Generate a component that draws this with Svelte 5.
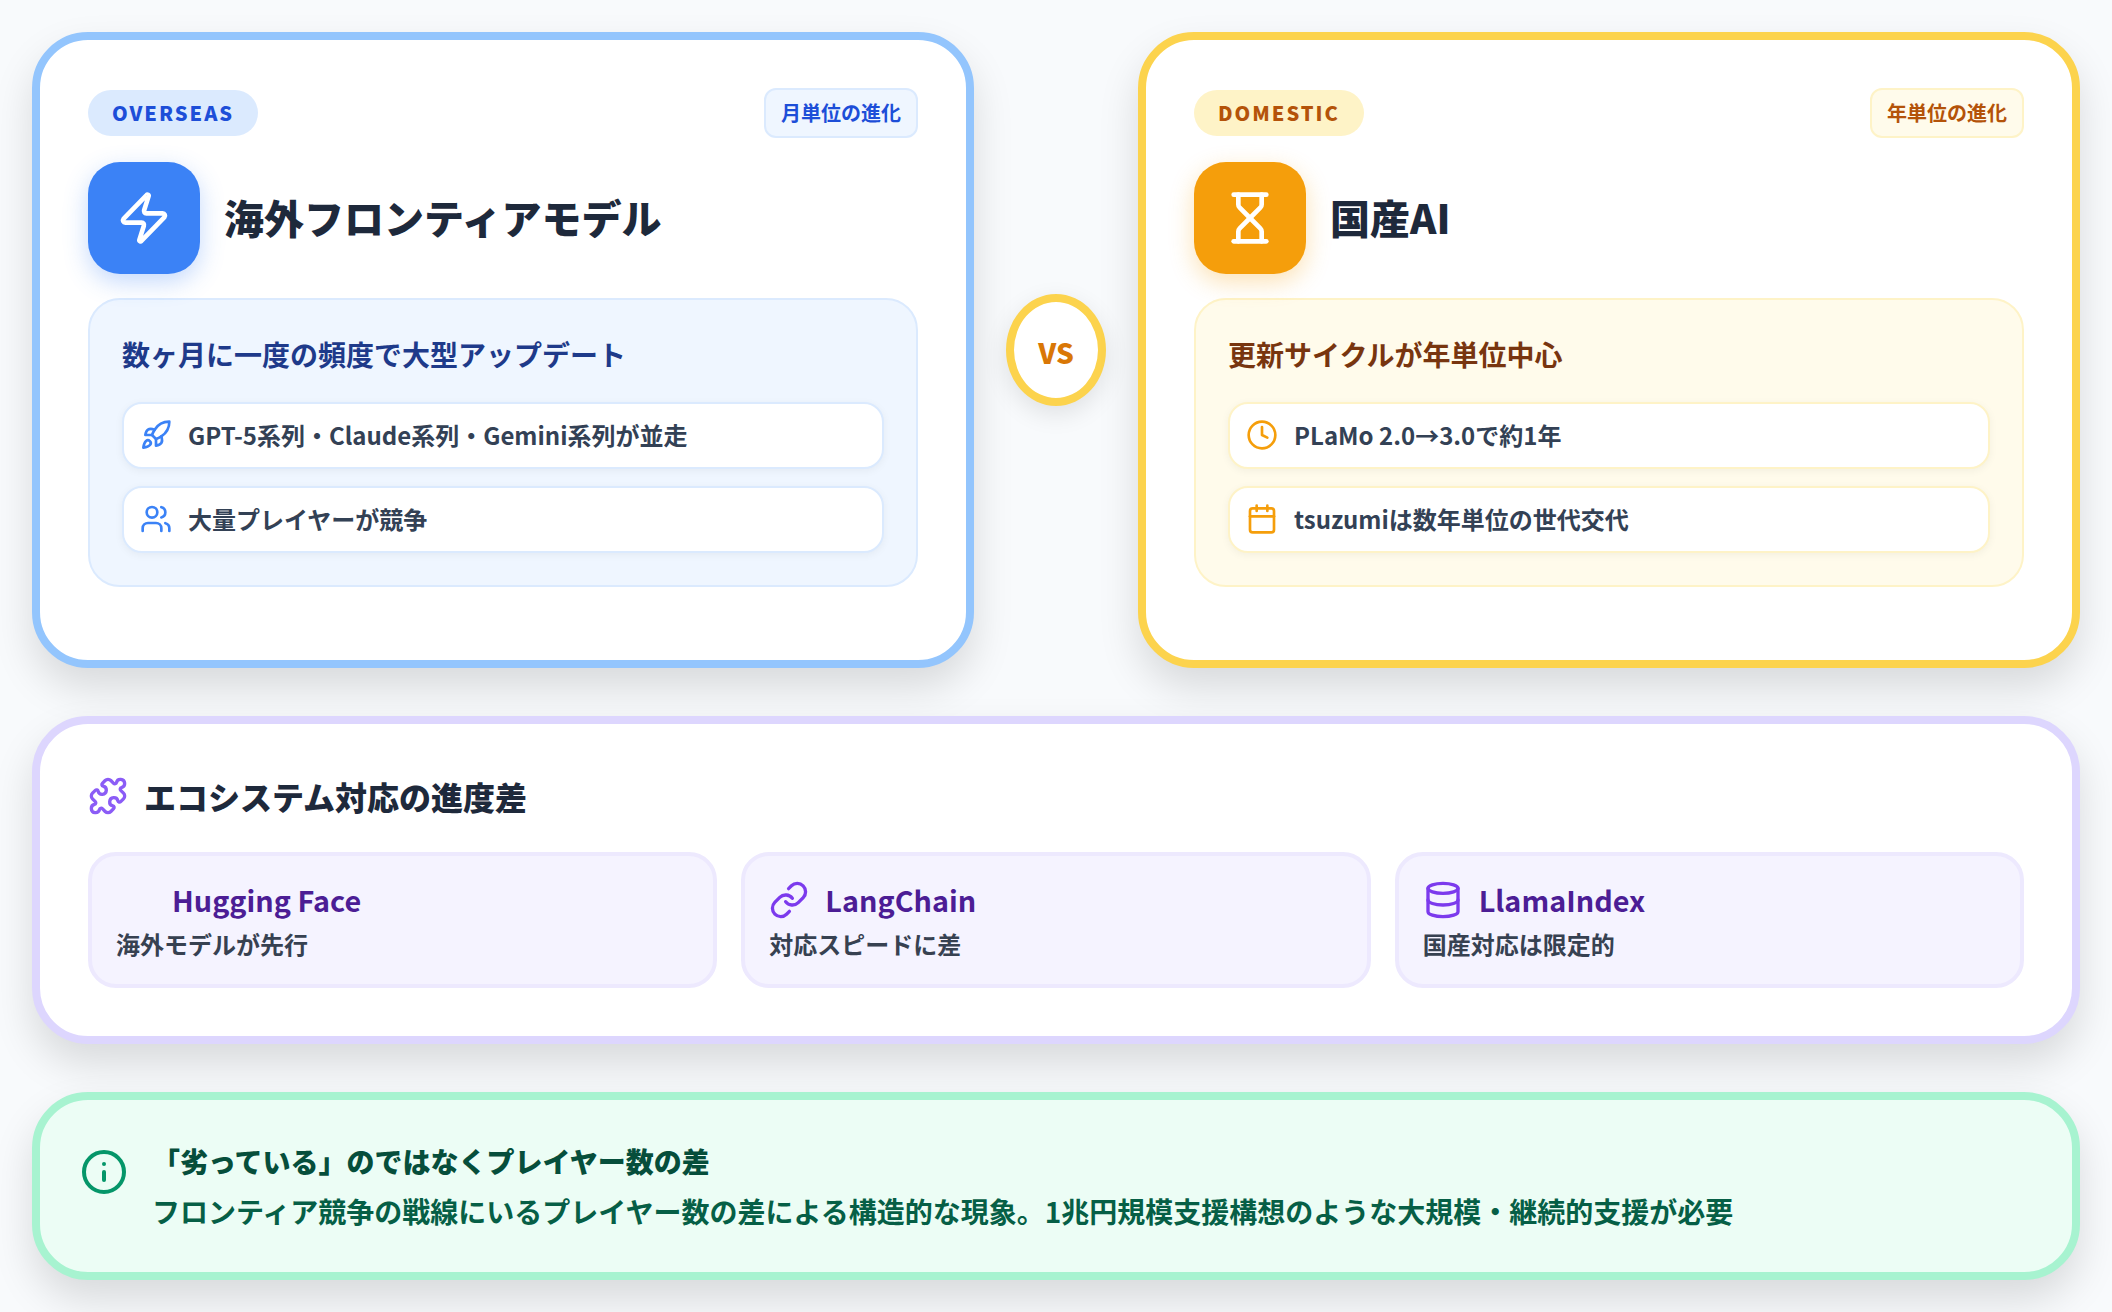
<script lang="ts">
  const icons = {
    zap: '<path d="M4 14a1 1 0 0 1-.78-1.63l9.9-10.2a.5.5 0 0 1 .86.46l-1.92 6.02A1 1 0 0 0 13 10h7a1 1 0 0 1 .78 1.63l-9.9 10.2a.5.5 0 0 1-.86-.46l1.92-6.02A1 1 0 0 0 11 14z"/>',
    hourglass: '<path d="M5 22h14"/><path d="M5 2h14"/><path d="M17 22v-4.172a2 2 0 0 0-.586-1.414L12 12l-4.414 4.414A2 2 0 0 0 7 17.828V22"/><path d="M7 2v4.172a2 2 0 0 0 .586 1.414L12 12l4.414-4.414A2 2 0 0 0 17 6.172V2"/>',
    rocket: '<path d="M4.5 16.5c-1.5 1.26-2 5-2 5s3.74-.5 5-2c.71-.84.7-2.13-.09-2.91a2.18 2.18 0 0 0-2.91-.09z"/><path d="m12 15-3-3a22 22 0 0 1 2-3.95A12.88 12.88 0 0 1 22 2c0 2.72-.78 7.5-6 11a22.35 22.35 0 0 1-4 2z"/><path d="M9 12H4s.55-3.03 2-4c1.62-1.08 5 0 5 0"/><path d="M12 15v5s3.03-.55 4-2c1.08-1.62 0-5 0-5"/>',
    users: '<path d="M16 21v-2a4 4 0 0 0-4-4H6a4 4 0 0 0-4 4v2"/><circle cx="9" cy="7" r="4"/><path d="M22 21v-2a4 4 0 0 0-3-3.87"/><path d="M16 3.13a4 4 0 0 1 0 7.75"/>',
    clock: '<circle cx="12" cy="12" r="10"/><polyline points="12 6 12 12 16 14"/>',
    calendar: '<path d="M8 2v4"/><path d="M16 2v4"/><rect width="18" height="18" x="3" y="4" rx="2"/><path d="M3 10h18"/>',
    puzzle: '<path d="M15.39 4.39a1 1 0 0 0 1.68-.474 2.5 2.5 0 1 1 3.014 3.015 1 1 0 0 0-.474 1.68l1.683 1.682a2.414 2.414 0 0 1 0 3.414L19.61 15.39a1 1 0 0 1-1.68-.474 2.5 2.5 0 1 0-3.014 3.015 1 1 0 0 1 .474 1.68l-1.683 1.682a2.414 2.414 0 0 1-3.414 0L8.61 19.61a1 1 0 0 0-1.68.474 2.5 2.5 0 1 1-3.014-3.015 1 1 0 0 0 .474-1.68l-1.683-1.682a2.414 2.414 0 0 1 0-3.414L4.39 8.61a1 1 0 0 1 1.68.474 2.5 2.5 0 1 0 3.014-3.015 1 1 0 0 1-.474-1.68l1.683-1.682a2.414 2.414 0 0 1 3.414 0z"/>',
    link: '<path d="M10 13a5 5 0 0 0 7.54.54l3-3a5 5 0 0 0-7.07-7.07l-1.72 1.71"/><path d="M14 11a5 5 0 0 0-7.54-.54l-3 3a5 5 0 0 0 7.07 7.07l1.71-1.71"/>',
    database: '<ellipse cx="12" cy="5" rx="9" ry="3"/><path d="M3 5V19A9 3 0 0 0 21 19V5"/><path d="M3 12A9 3 0 0 0 21 12"/>',
    info: '<circle cx="12" cy="12" r="10"/><path d="M12 16v-4"/><path d="M12 8h.01"/>'
  };

  const sides = [
    {
      cls: "overseas",
      tag: "OVERSEAS",
      chip: "月単位の進化",
      icon: icons.zap,
      title: "海外フロンティアモデル",
      heading: "数ヶ月に一度の頻度で大型アップデート",
      items: [
        { icon: icons.rocket, text: "GPT-5系列・Claude系列・Gemini系列が並走" },
        { icon: icons.users, text: "大量プレイヤーが競争" }
      ]
    },
    {
      cls: "domestic",
      tag: "DOMESTIC",
      chip: "年単位の進化",
      icon: icons.hourglass,
      title: "国産AI",
      heading: "更新サイクルが年単位中心",
      items: [
        { icon: icons.clock, text: "PLaMo 2.0→3.0で約1年" },
        { icon: icons.calendar, text: "tsuzumiは数年単位の世代交代" }
      ]
    }
  ];

  const tools = [
    { name: "Hugging Face", note: "海外モデルが先行", icon: "" },
    { name: "LangChain", note: "対応スピードに差", icon: icons.link },
    { name: "LlamaIndex", note: "国産対応は限定的", icon: icons.database }
  ];
</script>

{#snippet icon(paths, size, cls)}
  <svg class={cls} width={size} height={size} viewBox="0 0 24 24" fill="none" stroke="currentColor" stroke-width="2" stroke-linecap="round" stroke-linejoin="round">{@html paths}</svg>
{/snippet}

{#snippet side(s)}
  <section class="card side {s.cls}">
    <div class="top">
      <span class="tag">{s.tag}</span>
      <span class="chip">{s.chip}</span>
    </div>
    <div class="head">
      <div class="tile">{@render icon(s.icon, 56, "")}</div>
      <h2>{s.title}</h2>
    </div>
    <div class="panel">
      <h3>{s.heading}</h3>
      <ul>
        {#each s.items as item}
          <li>{@render icon(item.icon, 32, "li-icon")}<span>{item.text}</span></li>
        {/each}
      </ul>
    </div>
  </section>
{/snippet}

<main>
  <div class="compare">
    {@render side(sides[0])}
    <div class="vs">VS</div>
    {@render side(sides[1])}
  </div>

  <section class="card eco">
    <h2 class="eco-title">{@render icon(icons.puzzle, 40, "eco-icon")}エコシステム対応の進度差</h2>
    <div class="tools">
      {#each tools as t}
        <div class="tool">
          <div class="tool-name">
            <span class="tool-icon">{#if t.icon}{@render icon(t.icon, 40, "")}{/if}</span>
            {t.name}
          </div>
          <p>{t.note}</p>
        </div>
      {/each}
    </div>
  </section>

  <section class="card note">
    {@render icon(icons.info, 48, "note-icon")}
    <div>
      <strong>「劣っている」のではなくプレイヤー数の差</strong>
      <p>フロンティア競争の戦線にいるプレイヤー数の差による構造的な現象。1兆円規模支援構想のような大規模・継続的支援が必要</p>
    </div>
  </section>
</main>

<style>
  :global(body) {
    margin: 0;
    background: #f8fafc;
    font-family: "Noto Sans CJK JP", "Noto Sans", sans-serif;
    line-height: 1.5;
  }

  main {
    box-sizing: border-box;
    height: 1312px;
    padding: 32px;
    display: flex;
    flex-direction: column;
    gap: 48px;
  }

  h2, h3, p {
    margin: 0;
  }

  .card {
    box-sizing: border-box;
    background: #fff;
    border: 8px solid;
    border-radius: 56px;
    box-shadow: 0 20px 40px rgba(0, 0, 0, 0.13);
  }

  .compare {
    flex: 1;
    min-height: 0;
    display: flex;
    align-items: stretch;
    gap: 32px;
  }

  .side {
    flex: 1;
    min-width: 0;
    padding: 48px;
  }

  .overseas {
    --line: #93c5fd;
    --soft: #dbeafe;
    --pale: #eff6ff;
    --solid: #3b82f6;
    --glow: rgba(59, 130, 246, 0.3);
    --ink: #1d4ed8;
    --deep: #1e3a8a;
  }

  .domestic {
    --line: #fcd34d;
    --soft: #fef3c7;
    --pale: #fffbeb;
    --solid: #f59e0b;
    --glow: rgba(245, 158, 11, 0.3);
    --ink: #b45309;
    --deep: #78350f;
  }

  .side {
    border-color: var(--line);
  }

  .top {
    display: flex;
    align-items: center;
    justify-content: space-between;
    margin-bottom: 24px;
  }

  .tag {
    padding: 8px 24px;
    border-radius: 999px;
    background: var(--soft);
    color: var(--ink);
    font-size: 20px;
    font-weight: 900;
    letter-spacing: 2px;
  }

  .chip {
    padding: 8px 15px;
    border: 2px solid var(--soft);
    border-radius: 12px;
    background: var(--pale);
    color: var(--ink);
    font-size: 20px;
    font-weight: 700;
  }

  .head {
    display: flex;
    align-items: center;
    gap: 24px;
    margin-bottom: 24px;
  }

  .tile {
    width: 112px;
    height: 112px;
    flex: none;
    display: flex;
    align-items: center;
    justify-content: center;
    border-radius: 32px;
    background: var(--solid);
    color: #fff;
    box-shadow: 0 8px 24px var(--glow);
  }

  .head h2 {
    padding-bottom: 2px;
    font-size: 40px;
    font-weight: 900;
    color: #1e293b;
  }

  .panel {
    padding: 32px;
    border: 2px solid var(--soft);
    border-radius: 32px;
    background: var(--pale);
  }

  .panel h3 {
    margin-bottom: 25px;
    font-size: 28px;
    line-height: 1.6;
    font-weight: 700;
    color: var(--deep);
  }

  ul {
    list-style: none;
    margin: 0;
    padding: 0;
    display: flex;
    flex-direction: column;
    gap: 17px;
  }

  li {
    display: flex;
    align-items: center;
    gap: 16px;
    padding: 13.5px 16px;
    border: 2px solid var(--soft);
    border-radius: 20px;
    background: #fff;
    box-shadow: 0 2px 8px rgba(0, 0, 0, 0.05);
    font-size: 24px;
    font-weight: 700;
    color: #334155;
  }

  li :global(.li-icon) {
    flex: none;
    color: var(--solid);
  }

  .vs {
    box-sizing: border-box;
    width: 100px;
    height: 112px;
    flex: none;
    align-self: center;
    display: flex;
    align-items: center;
    justify-content: center;
    padding-top: 4px;
    border: 8px solid #fcd34d;
    border-radius: 50%;
    background: #fff;
    color: #d97706;
    font-size: 28px;
    font-weight: 900;
    box-shadow: 0 8px 24px rgba(0, 0, 0, 0.1);
  }

  .eco {
    padding: 48px;
    border-color: #ddd6fe;
  }

  .eco-title {
    display: flex;
    align-items: center;
    gap: 16px;
    margin-bottom: 32px;
    font-size: 32px;
    font-weight: 900;
    color: #1e293b;
  }

  .eco-title :global(.eco-icon) {
    color: #8b5cf6;
  }

  .tools {
    display: grid;
    grid-template-columns: repeat(3, 1fr);
    gap: 24px;
  }

  .tool {
    padding: 24px 24px 22px;
    border: 4px solid #ede9fe;
    border-radius: 28px;
    background: #f5f3ff;
  }

  .tool-name {
    display: flex;
    align-items: center;
    gap: 16px;
    height: 40px;
    margin-bottom: 6px;
    font-size: 28.8px;
    font-weight: 700;
    color: #4c1d95;
  }

  .tool-icon {
    width: 40px;
    height: 40px;
    flex: none;
    color: #7c3aed;
  }

  .tool p {
    font-size: 24px;
    font-weight: 700;
    color: #374151;
  }

  .note {
    display: flex;
    align-items: flex-start;
    gap: 24px;
    padding: 40px;
    border-color: #a7f3d0;
    background: #ecfdf5;
  }

  .note :global(.note-icon) {
    flex: none;
    margin-top: 8px;
    color: #059669;
  }

  .note strong {
    display: block;
    margin-bottom: 8px;
    font-size: 28px;
    font-weight: 900;
    color: #064e3b;
  }

  .note p {
    font-size: 28px;
    font-weight: 700;
    color: #065f46;
  }
</style>
